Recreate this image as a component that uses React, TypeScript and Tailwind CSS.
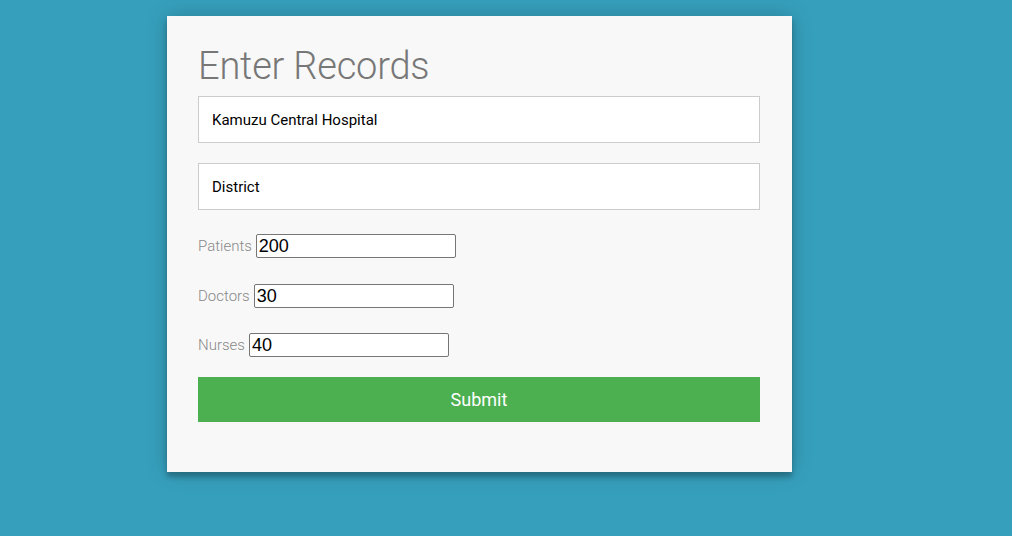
import { useState } from 'react';

export default function App() {
  const [form, setForm] = useState({
    hospital: 'Kamuzu Central Hospital',
    district: 'District',
    patients: '200',
    doctors: '30',
    nurses: '40',
  });

  const counts: { key: 'patients' | 'doctors' | 'nurses'; label: string }[] = [
    { key: 'patients', label: 'Patients' },
    { key: 'doctors', label: 'Doctors' },
    { key: 'nurses', label: 'Nurses' },
  ];

  return (
    <main className="min-h-screen w-full bg-[#369fbc] pt-4 pl-[167px] font-['Roboto',sans-serif]">
      <form
        className="w-[625px] h-[456px] bg-[#f8f8f8] px-[31px] pt-[27px] shadow-[0_0_20px_rgba(0,0,0,0.2),0_5px_5px_rgba(0,0,0,0.24)]"
        onSubmit={(e) => e.preventDefault()}
      >
        <h1 className="text-[38px] leading-[47px] font-light text-[#777] mb-[6px] tracking-[-0.2px]">Enter Records</h1>
        <input
          value={form.hospital}
          onChange={(e) => setForm({ ...form, hospital: e.target.value })}
          className="block w-[562px] h-[47px] bg-white border border-[#ccc] px-[13px] text-[15px] text-black outline-none mb-[20px]"
        />
        <input
          value={form.district}
          onChange={(e) => setForm({ ...form, district: e.target.value })}
          className="block w-[562px] h-[47px] bg-white border border-[#ccc] px-[13px] text-[15px] text-black outline-none"
        />
        <div className="flex flex-col gap-[26px] mt-[24px]">
          {counts.map((c, i) => (
            <label
              key={c.key}
              className={`flex items-center h-[24px] text-[15px] font-light text-[#888] ${i === 2 ? '-mt-px' : ''}`}
            >
              <span className="mr-[4px]">{c.label}</span>
              <input
                value={form[c.key]}
                onChange={(e) => setForm({ ...form, [c.key]: e.target.value })}
                className="w-[200px] h-[24px] bg-white border border-[#767676] rounded-[2px] px-[2px] text-[18px] text-black font-['Liberation_Sans',Arial,sans-serif]"
              />
            </label>
          ))}
        </div>
        <button
          type="submit"
          className="block w-[562px] h-[45px] mt-[20px] bg-[#4caf50] text-white text-[18px]"
        >
          Submit
        </button>
      </form>
    </main>
  );
}
